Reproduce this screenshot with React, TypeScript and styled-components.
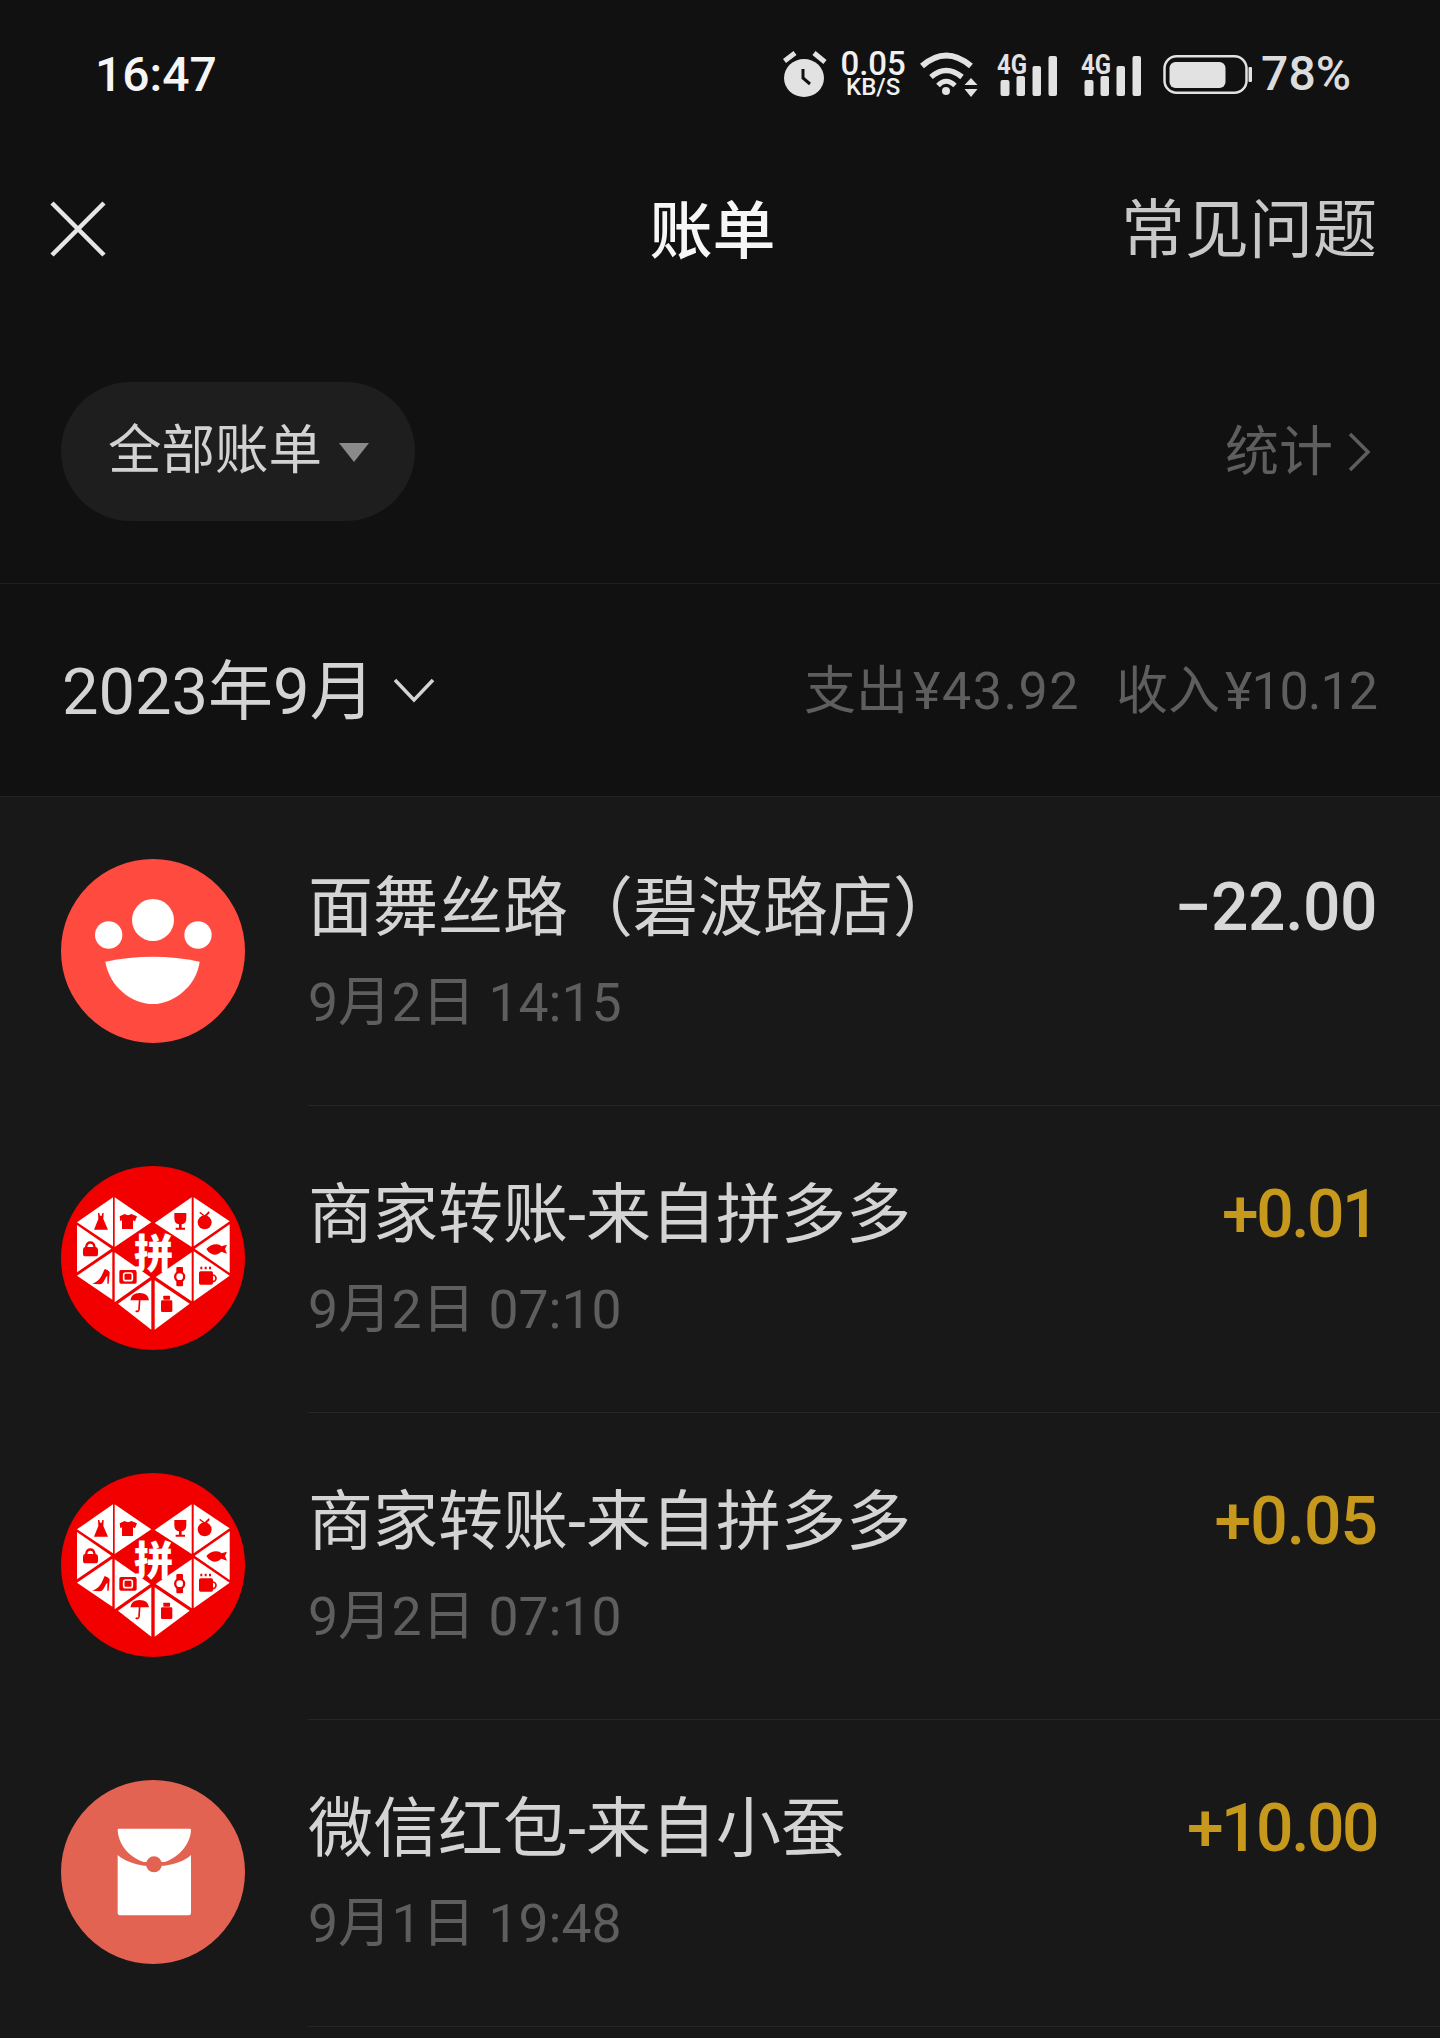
import React from "react";
import styled, { createGlobalStyle } from "styled-components";

const Global = createGlobalStyle`
  html, body { margin: 0; padding: 0; background: #111111; }
  * { box-sizing: border-box; }
`;

const FONT = `Roboto, "Noto Sans CJK SC", sans-serif`;
const LOGO_RED = "#f20000";

const Page = styled.div`
  width: 1440px;
  height: 2038px;
  background: #111111;
  overflow: hidden;
  display: flex;
  flex-direction: column;
  font-family: ${FONT};
`;

const StatusBar = styled.div`
  height: 148px;
  padding: 0 89px 0 95px;
  display: flex;
  align-items: center;
  justify-content: space-between;
  color: #f2f2f2;
`;

const Time = styled.div`
  font-size: 48px;
  font-weight: 500;
  line-height: 1;
  margin-top: 2px;
  color: #f5f5f5;
`;

const StatusIcons = styled.div`
  display: flex;
  align-items: center;
  gap: 12px;
  color: #e2e2e2;
`;

const StatusIcon = styled.svg<{ $ml?: number; $mt?: number }>`
  display: block;
  flex: none;
  margin-left: ${(p) => p.$ml ?? 0}px;
  margin-top: ${(p) => p.$mt ?? 0}px;
`;

const Speed = styled.div`
  width: 68px;
  display: flex;
  flex-direction: column;
  align-items: center;
  font-weight: 500;
  color: #f0f0f0;
`;

const SpeedValue = styled.span`
  font-size: 33px;
  line-height: 27px;
`;

const SpeedUnit = styled.span`
  font-size: 24px;
  line-height: 21px;
`;

const Battery = styled.div`
  font-size: 48px;
  font-weight: 500;
  line-height: 1;
  margin-left: -3px;
  color: #dcdcdc;
`;

const Header = styled.div`
  height: 162px;
  padding: 0 63px 0 48px;
  display: grid;
  grid-template-columns: 1fr auto 1fr;
  align-items: center;
`;

const CloseIcon = styled.svg`
  display: block;
`;

const Title = styled.div`
  font-size: 63px;
  font-weight: 500;
  color: #f6f6f6;
  line-height: 1;
  margin-top: 4px;
`;

const HelpLink = styled.div`
  justify-self: end;
  font-size: 64px;
  color: #c8c8c8;
  line-height: 1;
  margin-top: 4px;
`;

const FilterBar = styled.div`
  height: 274px;
  padding: 72px 69px 0 61px;
  border-bottom: 1px solid #1f1f1f;
  display: flex;
  align-items: flex-start;
  justify-content: space-between;
`;

const Pill = styled.div`
  width: 354px;
  height: 139px;
  border-radius: 70px;
  background: #1e1e1e;
  display: flex;
  align-items: center;
  padding-left: 47px;
  padding-bottom: 12px;
  gap: 17px;
  color: #d2d2d2;
  font-size: 53.5px;
`;

const Caret = styled.svg`
  display: block;
  margin-top: 14px;
`;

const StatsLink = styled.div`
  height: 139px;
  display: flex;
  align-items: center;
  gap: 14px;
  color: #5e5e5e;
  font-size: 54px;
`;

const StatsLabel = styled.span`
  margin-bottom: 8px;
`;

const MonthRow = styled.div`
  height: 213px;
  padding: 0 63px 0 62px;
  border-bottom: 1px solid #232323;
  display: flex;
  align-items: center;
  justify-content: space-between;
`;

const MonthPicker = styled.div`
  display: flex;
  align-items: center;
  gap: 18px;
  color: #d4d4d4;
  font-size: 65px;
  line-height: 1;
`;

const MonthLabel = styled.span`
  margin-top: 5px;
`;

const Summary = styled.div`
  display: flex;
  gap: 36px;
  margin-top: 4px;
  color: #5e5e5e;
  font-size: 52px;
  line-height: 1;
`;

const SummaryItem = styled.span`
  display: flex;
  gap: 5px;
`;

const SummaryValue = styled.span<{ $spacing: number }>`
  letter-spacing: ${(p) => p.$spacing}px;
`;

const List = styled.div`
  flex: 1;
  background: #181818;
  padding-top: 2px;
`;

const Row = styled.div`
  height: 307px;
  padding-left: 61px;
  display: flex;
  align-items: center;
`;

const Avatar = styled.div<{ $color: string }>`
  width: 184px;
  height: 184px;
  flex: none;
  margin-bottom: 4px;
  border-radius: 50%;
  background: ${(p) => p.$color};
  overflow: hidden;
`;

const AvatarArt = styled.svg`
  display: block;
  width: 184px;
  height: 184px;
`;

const RowBody = styled.div`
  flex: 1;
  align-self: stretch;
  margin-left: 63px;
  padding: 69px 63px 0 0;
  border-bottom: 1px solid #262626;
  display: flex;
  justify-content: space-between;
  align-items: flex-start;
`;

const RowText = styled.div`
  display: flex;
  flex-direction: column;
  gap: 20px;
`;

const RowTitle = styled.div`
  font-size: 65px;
  line-height: 80px;
  color: #d4d4d4;
  white-space: nowrap;
`;

const RowDate = styled.div`
  font-size: 53.5px;
  line-height: 70px;
  color: #5e5e5e;
  white-space: nowrap;
`;

const Amount = styled.div<{ $income: boolean; $spacing: number }>`
  font-size: 66px;
  line-height: 80px;
  font-weight: 500;
  letter-spacing: ${(p) => p.$spacing}px;
  color: ${(p) => (p.$income ? "#c6981c" : "#d8d8d8")};
  white-space: nowrap;
`;

const AlarmIcon = () => (
  <StatusIcon width={44} height={46} viewBox="0 0 44 46">
    <ellipse cx="21" cy="27" rx="20" ry="19" fill="currentColor" />
    <path d="M20 18V27L27 33" fill="none" stroke="#111" strokeWidth="3" />
    <path d="M1.5 10L12 2M31 2L42 11" stroke="currentColor" strokeWidth="5" fill="none" />
  </StatusIcon>
);

const WifiIcon = () => (
  <StatusIcon width={59} height={45} viewBox="0 0 59 45">
    <g fill="none" stroke="currentColor" strokeLinecap="butt">
      <path d="M3 14Q27-7 52 14" strokeWidth="6" />
      <path d="M12 25Q27 12 43 25" strokeWidth="5.5" />
      <path d="M19 33.500Q27 25 36 33.500" strokeWidth="5" />
    </g>
    <circle cx="27" cy="39" r="4" fill="currentColor" />
    <path d="M45.500 33H58.500L52 26ZM45.500 37H58.500L52 45Z" fill="currentColor" />
  </StatusIcon>
);

const SignalIcon = ({ ml }: { ml: number }) => (
  <StatusIcon $ml={ml} $mt={-8} width={62} height={51} viewBox="0 -8 62 51">
    <text
      x="1"
      y="21"
      fontFamily="Roboto, sans-serif"
      fontWeight="700"
      fontSize="28"
      fill="currentColor"
      textLength="30"
      lengthAdjust="spacingAndGlyphs"
    >
      4G
    </text>
    <rect x="4.500" y="27" width="9" height="16" rx="2" fill="currentColor" />
    <rect x="20.500" y="23" width="8.500" height="20" rx="2" fill="currentColor" />
    <rect x="36.500" y="13" width="8.500" height="30" rx="2" fill="currentColor" />
    <rect x="52.500" y="3" width="8.500" height="40" rx="2" fill="currentColor" />
  </StatusIcon>
);

const BatteryIcon = () => (
  <StatusIcon $ml={9} width={89} height={39} viewBox="0 0 89 39">
    <rect x="1.500" y="1.250" width="82" height="36.500" rx="12" fill="none" stroke="currentColor" strokeWidth="2.500" />
    <rect x="6.500" y="7" width="56" height="26" rx="6" fill="currentColor" />
    <rect x="85.500" y="12" width="3.500" height="15" rx="1" fill="currentColor" />
  </StatusIcon>
);

const FaceArt = () => (
  <AvatarArt viewBox="64 57 552 552">
    <g fill="#fff">
      <circle cx="340" cy="240" r="63" />
      <circle cx="207" cy="285" r="41" />
      <circle cx="475" cy="285" r="41" />
      <path d="M197 365Q340 335 480 365C470 440 400 492 340 492C275 492 210 440 197 365Z" />
    </g>
  </AvatarArt>
);

const EnvelopeArt = () => (
  <AvatarArt viewBox="64 59 552 552">
    <path
      fill="#fff"
      d="M238 205H450Q454 205 454 209C452 250 420 290 375 305H312C265 290 236 250 234 209Q234 205 238 205Z"
    />
    <path
      fill="#fff"
      d="M234 284C255 302 285 312 312 316H375C405 312 435 302 454 284V458Q454 465 447 465H241Q234 465 234 458Z"
    />
    <circle cx="343" cy="312" r="24" fill="#e26352" />
  </AvatarArt>
);

const tiles = [
  "220,143 112,218 220,290",
  "225,143 335,218 225,292",
  "345,220 456,143 456,292",
  "462,143 570,215 462,290",
  "112,226 215,297 112,368",
  "570,224 465,297 570,370",
  "112,378 218,306 218,450",
  "225,308 332,382 225,458",
  "348,382 456,308 456,455",
  "462,305 570,378 462,455",
  "235,462 335,392 335,540",
  "345,392 450,462 345,540",
];

const PddArt = () => (
  <AvatarArt viewBox="64 49 552 552">
    {tiles.map((t) => (
      <polygon key={t} points={t} fill="#fff" />
    ))}
    <g fill={LOGO_RED}>
      {/* dress */}
      <path d="M175 190L179 190L181 198L186 198L188 190L192 190L191 208L205 240L163 240L176 208Z" />
      {/* shirt */}
      <path d="M240 200L255 193Q265 200 275 193L292 200L286 215L280 212L280 238L247 238L247 212L242 215Z" />
      {/* wine glass */}
      <path d="M404 190H440V205Q440 222 426 224V234H436V240H408V234H418V224Q404 222 404 205Z" />
      {/* fruit */}
      <circle cx="495" cy="218" r="21" />
      <path d="M481 186L495 197L508 184L510 190L497 203L479 190Z" />
      {/* bag */}
      <path d="M130 300Q130 293 136 292Q138 275 152 275Q166 275 168 292Q175 293 175 300L175 312Q175 320 168 320H137Q130 320 130 312Z" />
      {/* fish */}
      <path d="M500 298Q515 280 540 285L545 290L562 285L556 298L562 312L545 306Q530 320 515 312Q505 308 500 298Z" />
      {/* heel */}
      <path d="M158 402Q175 397 185 380L195 358Q205 360 210 368L207 402H203L203 378Q198 382 195 390Q190 402 180 404Z" />
      {/* camera */}
      <rect x="239" y="361" width="52" height="41" rx="5" />
      {/* watch */}
      <rect x="410" y="352" width="20" height="58" rx="3" />
      <circle cx="420" cy="381" r="17" />
      {/* cup */}
      <rect x="478" y="365" width="42" height="40" rx="5" />
      <path d="M482 351h6v8h-6zM495 351h6v8h-6zM508 351h6v8h-6z" />
      {/* umbrella */}
      <path d="M272 452Q275 430 300 430Q325 430 328 452Z" />
      {/* jar */}
      <rect x="364" y="452" width="34" height="35" rx="4" />
      <rect x="371" y="438" width="20" height="12" rx="2" />
    </g>
    <path d="M143 292Q144 282 152 282Q160 282 161 292Z" fill="#fff" />
    <rect x="252" y="370" width="26" height="23" rx="6" fill="none" stroke="#fff" strokeWidth="5" />
    <circle cx="420" cy="381" r="10" fill="#fff" />
    <path d="M519 376a10 10 0 0 1 0 20" fill="none" stroke={LOGO_RED} strokeWidth="5" />
    <path d="M300 450L298 480Q296 488 288 484" fill="none" stroke={LOGO_RED} strokeWidth="5" />
    <text
      x="342"
      y="354"
      textAnchor="middle"
      fontFamily={`"Noto Sans CJK SC", sans-serif`}
      fontWeight="900"
      fontSize="118"
      fill="#fff"
    >
      拼
    </text>
  </AvatarArt>
);

type Bill = {
  title: string;
  date: string;
  amount: string;
  spacing: number;
  income: boolean;
  color: string;
  art: React.ReactNode;
};

const bills: Bill[] = [
  { title: "面舞丝路（碧波路店）", date: "9月2日 14:15", amount: "−22.00", spacing: -0.5, income: false, color: "#ff4b3f", art: <FaceArt /> },
  { title: "商家转账-来自拼多多", date: "9月2日 07:10", amount: "+0.01", spacing: -2.5, income: true, color: LOGO_RED, art: <PddArt /> },
  { title: "商家转账-来自拼多多", date: "9月2日 07:10", amount: "+0.05", spacing: -1, income: true, color: LOGO_RED, art: <PddArt /> },
  { title: "微信红包-来自小蚕", date: "9月1日 19:48", amount: "+10.00", spacing: -2.5, income: true, color: "#e26352", art: <EnvelopeArt /> },
];

export default function App() {
  return (
    <Page>
      <Global />
      <StatusBar>
        <Time>16:47</Time>
        <StatusIcons>
          <AlarmIcon />
          <Speed>
            <SpeedValue>0.05</SpeedValue>
            <SpeedUnit>KB/S</SpeedUnit>
          </Speed>
          <WifiIcon />
          <SignalIcon ml={6} />
          <SignalIcon ml={10} />
          <BatteryIcon />
          <Battery>78%</Battery>
        </StatusIcons>
      </StatusBar>

      <Header>
        <CloseIcon width={60} height={60} viewBox="0 0 60 60">
          <path d="M4 4L56 56M56 4L4 56" stroke="#e6e6e6" strokeWidth="4.500" fill="none" />
        </CloseIcon>
        <Title>账单</Title>
        <HelpLink>常见问题</HelpLink>
      </Header>

      <FilterBar>
        <Pill>
          全部账单
          <Caret width={30} height={19} viewBox="0 0 30 19">
            <path d="M0 0H30L15 19Z" fill="#8a8a8a" />
          </Caret>
        </Pill>
        <StatsLink>
          <StatsLabel>统计</StatsLabel>
          <svg width={24} height={40} viewBox="0 0 24 40">
            <path d="M3 2L21 20L3 38" fill="none" stroke="#5e5e5e" strokeWidth="3.500" />
          </svg>
        </StatsLink>
      </FilterBar>

      <MonthRow>
        <MonthPicker>
          <MonthLabel>2023年9月</MonthLabel>
          <svg width={42} height={26} viewBox="0 0 42 26">
            <path d="M2 3L21 23L40 3" fill="none" stroke="#d4d4d4" strokeWidth="3.500" />
          </svg>
        </MonthPicker>
        <Summary>
          <SummaryItem>
            <span>支出</span>
            <SummaryValue $spacing={1.5}>¥43.92</SummaryValue>
          </SummaryItem>
          <SummaryItem>
            <span>收入</span>
            <SummaryValue $spacing={-1}>¥10.12</SummaryValue>
          </SummaryItem>
        </Summary>
      </MonthRow>

      <List>
        {bills.map((b, i) => (
          <Row key={i}>
            <Avatar $color={b.color}>{b.art}</Avatar>
            <RowBody>
              <RowText>
                <RowTitle>{b.title}</RowTitle>
                <RowDate>{b.date}</RowDate>
              </RowText>
              <Amount $income={b.income} $spacing={b.spacing}>
                {b.amount}
              </Amount>
            </RowBody>
          </Row>
        ))}
      </List>
    </Page>
  );
}
